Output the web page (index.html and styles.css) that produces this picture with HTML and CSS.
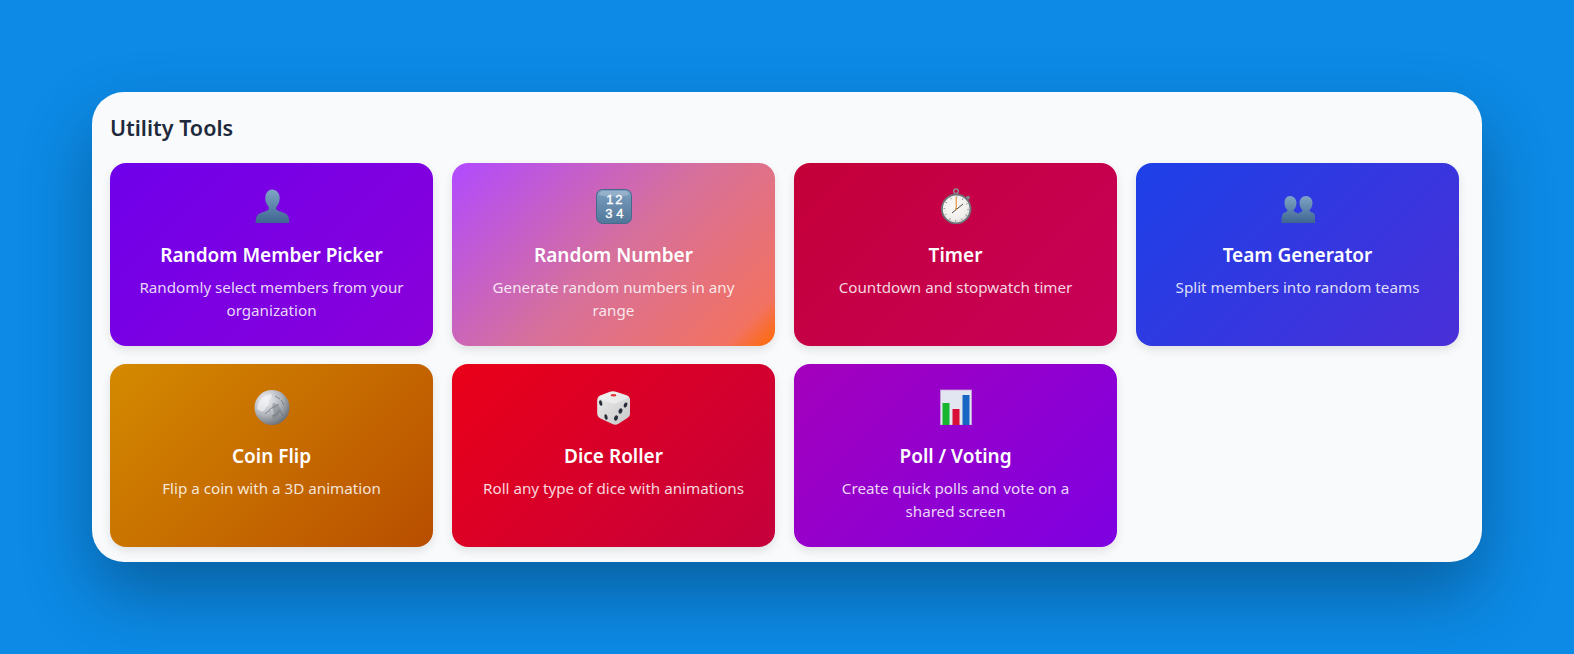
FILE: index.html
```html
<!DOCTYPE html>
<html lang="en">
<head>
<meta charset="utf-8">
<title>Utility Tools</title>
<link rel="stylesheet" href="styles.css">
</head>
<body>
<svg class="defs" width="0" height="0" aria-hidden="true">
  <defs>
    <linearGradient id="bust" x1="0" y1="0" x2="0" y2="1">
      <stop offset="0" stop-color="#7fa5c6"/><stop offset="1" stop-color="#3d6590"/>
    </linearGradient>
    <linearGradient id="tile" x1="0" y1="0" x2="0" y2="1">
      <stop offset="0" stop-color="#7c9fc0"/><stop offset="1" stop-color="#4f7699"/>
    </linearGradient>
    <radialGradient id="face" cx=".45" cy=".42" r=".6">
      <stop offset="0" stop-color="#fbfaf8"/><stop offset=".75" stop-color="#f0eeeb"/><stop offset="1" stop-color="#c9c7c6"/>
    </radialGradient>
    <radialGradient id="coin" cx=".33" cy=".28" r=".85">
      <stop offset="0" stop-color="#eff0f3"/><stop offset=".5" stop-color="#b4b8bf"/><stop offset="1" stop-color="#5a5e66"/>
    </radialGradient>
    <linearGradient id="die" x1="0" y1="0" x2="1" y2="1">
      <stop offset="0" stop-color="#ececec"/><stop offset="1" stop-color="#c8c8c8"/>
    </linearGradient>
  </defs>
</svg>
<main class="panel">
  <h2 class="panel-title">Utility Tools</h2>
  <div class="tools">
    <article class="tool tool-member">
      <svg class="tool-icon" viewBox="0 0 36 36"><path fill="url(#bust)" d="M18 1.500c4.800 0 7.700 3.700 7.700 8.500 0 3.300-1.200 6.500-3 8.600-.9 1.100-.9 2.600.3 3.500 1.900 1.300 6.300 2.200 8.800 3.700 2.300 1.300 3.300 3.400 3.600 9.200H1.600c.3-5.800 1.300-7.900 3.600-9.200 2.500-1.500 6.900-2.400 8.800-3.700 1.200-.9 1.200-2.400.3-3.500-1.800-2.100-3-5.300-3-8.600 0-4.800 2.900-8.500 6.700-8.500z"/></svg>
      <h3 class="tool-name">Random Member Picker</h3>
      <p class="tool-desc">Randomly select members from your organization</p>
    </article>
    <article class="tool tool-number">
      <svg class="tool-icon" viewBox="0 0 36 36"><rect x=".5" y="1.500" width="35" height="34" rx="6" fill="url(#tile)" stroke="#46688a" stroke-width="1"/><path fill="#fff" opacity=".22" d="M3 7c0-2.500 1.500-4 4-4h22c2.500 0 4 1.500 4 4-8 2-22 2-30 0z"/><text class="tile-digits" x="10.200 19.200" y="16">12</text><text class="tile-digits" x="9.200 20.200" y="29.800">34</text></svg>
      <h3 class="tool-name">Random Number</h3>
      <p class="tool-desc">Generate random numbers in any range</p>
    </article>
    <article class="tool tool-timer">
      <svg class="tool-icon" viewBox="0 0 36 36"><circle cx="18" cy="3.200" r="2.300" fill="none" stroke="#8d9298" stroke-width="1.400"/><rect x="16.500" y="5" width="3" height="2" fill="#7d8288"/><circle cx="30" cy="9.700" r="1.900" fill="#7f848a"/><circle cx="18.200" cy="21" r="14.300" fill="url(#face)" stroke="#6d7278" stroke-width="1.800"/><circle cx="18.200" cy="21" r="11.800" fill="none" stroke="#777" stroke-width="1.700" stroke-dasharray="0.700 5.480"/><path stroke="#e88a2c" stroke-width="1.100" d="M18.200 9v12"/><path stroke="#4a4a4a" stroke-width="1" d="M14 25l11-9"/><circle cx="18.200" cy="21" r="1" fill="#d58a3a"/></svg>
      <h3 class="tool-name">Timer</h3>
      <p class="tool-desc">Countdown and stopwatch timer</p>
    </article>
    <article class="tool tool-team">
      <svg class="tool-icon" viewBox="0 0 36 36"><path fill="url(#bust)" d="M10 8c3.700 0 6.500 2.900 6.500 7 0 2.500-1 5-2.400 6.500-.7.800-.6 1.800.3 2.300 1 .5 2.100 1 3.600 1.700 1.500-.7 2.600-1.200 3.600-1.700.9-.5 1-1.500.3-2.300-1.400-1.500-2.400-4-2.400-6.500 0-4.100 2.800-7 6.500-7s6.500 2.900 6.500 7c0 2.500-1 5-2.400 6.500-.7.800-.6 1.800.3 2.300 1.400.7 2.900 1 3.600 1.700.7.800 1 2 1 3.500H35v6H1.500v-6H2c0-1.500.3-2.700 1-3.500.7-.7 2.200-1 3.600-1.700.9-.5 1-1.500.3-2.300C5.500 20 4.500 17.500 4.500 15c0-4.100 2-7 5.500-7z"/></svg>
      <h3 class="tool-name">Team Generator</h3>
      <p class="tool-desc">Split members into random teams</p>
    </article>
    <article class="tool tool-coin">
      <svg class="tool-icon" viewBox="0 0 36 36"><circle cx="18" cy="18.500" r="17.500" fill="url(#coin)"/><path fill="#f4f5f7" opacity=".65" d="M3 20c1-9 6-14 14-15 2 3-1 5-3 7 2 2 1 5-2 6-1 5-5 6-9 2z"/><path fill="none" stroke="#62666d" stroke-width="1" opacity=".65" d="M21 7l5 3M27 11l3 5M15 21c3-3 7-3 10-6M18 27c3 0 6-3 7-6M26 22l3 5M11 25c2-2 3-3 5-3"/><path fill="#6e7279" opacity=".4" d="M19 14c4 0 7 3 8 7-1 5-5 9-9 9 2-3 3-6 1-9-1-3-1-5 0-7z"/></svg>
      <h3 class="tool-name">Coin Flip</h3>
      <p class="tool-desc">Flip a coin with a 3D animation</p>
    </article>
    <article class="tool tool-dice">
      <svg class="tool-icon" viewBox="0 0 36 36"><path fill="url(#die)" d="M14 2.700c1.800-.7 4-.8 6 0l10.500 3.500c2.200.7 3.500 2.300 3.500 4.300v14c0 2-1 3.600-3 4.700l-8.500 5.500c-2 1.100-4 1.300-6 .2L4.500 29.500C2.500 28.400 1.200 26.700 1.200 24.500v-13c0-2.300 1-4 3.200-5z"/><path fill="#fff" opacity=".4" d="M14 3c1.800-.7 4-.8 6 0l12 4c1 .4 1 1.300 0 1.900l-12 5.500c-1.400.6-3 .6-4.400 0L3 8.900c-1-.6-1-1.500 0-1.900z"/><ellipse cx="17.500" cy="6.300" rx="2.900" ry="1.300" fill="#e0353a"/><ellipse cx="4.700" cy="14" rx="1.500" ry="2.800" fill="#262d38" transform="rotate(-15 4.700 14)"/><ellipse cx="10" cy="28" rx="1.500" ry="2.800" fill="#262d38" transform="rotate(-15 10 28)"/><ellipse cx="29.500" cy="16" rx="1.700" ry="2.700" fill="#262d38" transform="rotate(25 29.500 16)"/><ellipse cx="24.500" cy="22" rx="1.900" ry="2.700" fill="#262d38" transform="rotate(25 24.500 22)"/><ellipse cx="20" cy="29" rx="1.900" ry="2.700" fill="#262d38" transform="rotate(25 20 29)"/></svg>
      <h3 class="tool-name">Dice Roller</h3>
      <p class="tool-desc">Roll any type of dice with animations</p>
    </article>
    <article class="tool tool-poll">
      <svg class="tool-icon" viewBox="0 0 36 36"><rect x="2.500" y="1" width="31" height="35" fill="#e2e6f1" stroke="#cda3d8" stroke-width=".8"/><path fill="#18b52e" d="M4.500 14H11.500V36H4.500z"/><path fill="#d80f37" d="M14.500 20H21.500V36H14.500z"/><path fill="#1766c4" d="M24.500 6H31.500V36H24.500z"/></svg>
      <h3 class="tool-name">Poll / Voting</h3>
      <p class="tool-desc">Create quick polls and vote on a shared screen</p>
    </article>
  </div>
</main>
</body>
</html>
```

FILE: styles.css
```css
* { box-sizing: border-box; }
html, body { height: 100%; }
body {
  margin: 0;
  background: #0c8ae6;
  font-family: "Noto Sans", sans-serif;
  padding: 92px;
  overflow: hidden;
}
.defs { position: absolute; }
.panel {
  width: 1390px;
  height: 470px;
  background: #f9fafc;
  border-radius: 32px;
  padding: 18px 23px 15px 18px;
  box-shadow: 0 32px 70px rgba(0, 0, 0, .3);
}
.panel-title {
  margin: 0 0 17px;
  font-size: 21.500px;
  line-height: 36px;
  font-weight: 600;
  color: #1e293b;
}
.tools {
  display: grid;
  grid-template-columns: repeat(4, 323px);
  gap: 18px 19px;
}
.tool {
  height: 183px;
  padding: 24px 24px;
  border-radius: 16px;
  text-align: center;
  color: #fff;
  box-shadow: 0 4px 10px rgba(0, 0, 0, .1);
}
.tool-icon {
  display: block;
  width: 36px;
  height: 36px;
  margin: 1px auto 0;
}
.tool-name {
  margin: 17px 0 7px;
  font-size: 19px;
  line-height: 28px;
  font-weight: 600;
}
.tool-desc {
  margin: 0;
  font-size: 15.200px;
  line-height: 23px;
  color: rgba(255, 255, 255, .85);
}
.tile-digits {
  font: 400 13px "Liberation Sans", sans-serif;
  fill: #fff;
  stroke: #fff;
  stroke-width: .35px;
}
.tool-member { background: linear-gradient(135deg, #6f00ea, #8a00da); }
.tool-number { background: linear-gradient(135deg, #b14aff, #d6709c 50%, #f27262 90%, #ff6a00); }
.tool-timer { background: linear-gradient(135deg, #c40038, #c8005a); }
.tool-team { background: linear-gradient(135deg, #1d40e8, #4a2fd8); }
.tool-coin { background: linear-gradient(135deg, #d48a00, #b84e00); }
.tool-dice { background: linear-gradient(135deg, #ea0018, #c4003c); }
.tool-poll { background: linear-gradient(135deg, #a400bc, #7e00e2); }
```
